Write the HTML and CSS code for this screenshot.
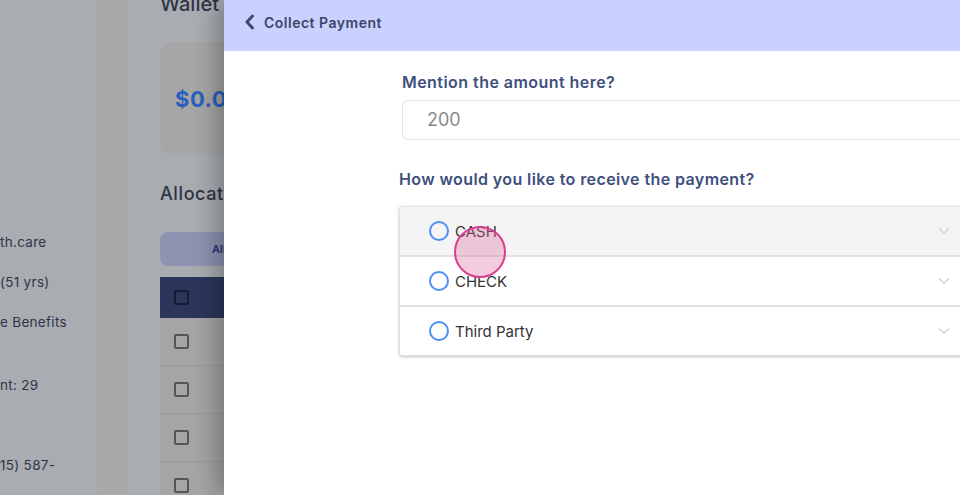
FILE: index.html
```html
<!DOCTYPE html>
<html>
<head>
<meta charset="utf-8">
<link rel="stylesheet" href="styles.css">
</head>
<body>
<div class="page">
  <aside class="info">
    <div class="line l1">th.care</div>
    <div class="line l2">(51 yrs)</div>
    <div class="line l3">e Benefits</div>
    <div class="line l4">nt: 29</div>
    <div class="line l5">15) 587-</div>
  </aside>
  <div class="gutter"></div>
  <main class="main">
    <h2 class="title">Wallet</h2>
    <div class="card"><span class="amount">$0.00</span></div>
    <h3 class="sub">Allocations</h3>
    <div class="pill">All</div>
    <div class="table">
      <div class="row head"><span class="cb"></span></div>
      <div class="row"><span class="cb"></span></div>
      <div class="row"><span class="cb"></span></div>
      <div class="row"><span class="cb"></span></div>
      <div class="row"><span class="cb"></span></div>
    </div>
  </main>

  <section class="panel">
    <header class="panel-head">
      <svg class="back" width="11" height="16" viewBox="0 0 11 16"><path d="M8.5 2 L3 8 L8.5 14" fill="none" stroke="#3e4a70" stroke-width="3" stroke-linecap="round" stroke-linejoin="round"/></svg>
      <span>Collect Payment</span>
    </header>
    <div class="panel-body">
      <label class="label">Mention the amount here?</label>
      <div class="input">200</div>
      <label class="label label2">How would you like to receive the payment?</label>
      <div class="accordion">
        <div class="opt active"><span class="radio"></span><span class="opt-text">CASH</span><svg class="chev" width="12" height="8" viewBox="0 0 12 8"><path d="M1 1.5 L6 6 L11 1.5" fill="none" stroke="#d4d4d8" stroke-width="1.5"/></svg></div>
        <div class="opt"><span class="radio"></span><span class="opt-text">CHECK</span><svg class="chev" width="12" height="8" viewBox="0 0 12 8"><path d="M1 1.5 L6 6 L11 1.5" fill="none" stroke="#d4d4d8" stroke-width="1.5"/></svg></div>
        <div class="opt"><span class="radio"></span><span class="opt-text">Third Party</span><svg class="chev" width="12" height="8" viewBox="0 0 12 8"><path d="M1 1.5 L6 6 L11 1.5" fill="none" stroke="#d4d4d8" stroke-width="1.5"/></svg></div>
      </div>
    </div>
  </section>
  <div class="touch"></div>
</div>
</body>
</html>
```

FILE: styles.css
```css
* { box-sizing: border-box; }
html, body { margin: 0; padding: 0; }
body {
  width: 960px;
  height: 495px;
  overflow: hidden;
  font-family: Inter, "Noto Sans", sans-serif;
  background: #a9adb2;
}
.page {
  position: relative;
  display: grid;
  grid-template-columns: 97px 31px 1fr;
  height: 495px;
}
.info {
  background: #a9adb2;
  padding-top: 232px;
  color: #2e3546;
  font-size: 13.5px;
  letter-spacing: 0.3px;
  white-space: nowrap;
}
.line { height: 20px; line-height: 20px; }
.l2 { margin-top: 20px; }
.l3 { margin-top: 20px; }
.l4 { margin-top: 43px; }
.l5 { margin-top: 60px; }
.gutter { background: #a8a9ab; }
.main {
  background: #a9adb2;
  padding-left: 32px;
  overflow: hidden;
}
.title {
  margin: -9px 0 0;
  font-size: 20px;
  line-height: 26px;
  font-weight: 500;
  color: #2e3546;
}
.card {
  margin-top: 25px;
  width: 200px;
  height: 113px;
  border-radius: 12px;
  background: #a6a6a7;
  display: flex;
  align-items: center;
  padding-left: 15px;
}
.amount {
  font-size: 22px;
  font-weight: 700;
  color: #2b5fbf;
  letter-spacing: 0.5px;
}
.sub {
  margin: 27px 0 0;
  font-size: 18px;
  line-height: 24px;
  font-weight: 500;
  color: #2e3546;
  letter-spacing: 0.6px;
}
.pill {
  margin-top: 26px;
  width: 200px;
  height: 34px;
  border-radius: 8px;
  background: #8e93b2;
  color: #263578;
  font-size: 11px;
  font-weight: 600;
  line-height: 34px;
  padding-left: 52px;
}
.table { margin-top: 11px; width: 200px; }
.row {
  height: 48px;
  background: #a5a5a5;
  border-bottom: 1px solid #999a9c;
  display: flex;
  align-items: center;
  padding-left: 14px;
}
.row.head { height: 41px; background: #2b365a; border-bottom: none; }
.cb {
  width: 15px; height: 15px;
  border: 2px solid #555;
  border-radius: 2px;
}
.head .cb { border-color: #151c30; }

.panel {
  position: absolute;
  left: 224px;
  top: 0;
  width: 736px;
  height: 495px;
  background: #fff;
  box-shadow: -8px 0 22px rgba(0, 0, 0, 0.28);
  overflow: hidden;
}
.panel-head {
  height: 51px;
  background: #cbd1fe;
  display: flex;
  align-items: center;
  padding: 0 0 6px 20px;
  gap: 9px;
  color: #3a4668;
  font-size: 14px;
  font-weight: 600;
  letter-spacing: 0.5px;
}
.back { margin-top: -1px; }
.panel-body {
  padding: 19px 0 0 178px;
}
.label {
  display: block;
  font-size: 16px;
  line-height: 24px;
  font-weight: 600;
  color: #3e4f7d;
  letter-spacing: 0.45px;
}
.input {
  margin-top: 6px;
  width: 570px;
  height: 40px;
  border: 1px solid #e2e2e2;
  border-radius: 6px;
  padding-left: 24px;
  line-height: 38px;
  font-size: 18px;
  color: #8a8a8a;
}
.label2 { margin: 27px 0 0 -3px; letter-spacing: 0.4px; }
.accordion {
  margin: 15px 0 0 -3px;
  width: 570px;
  border: 1px solid #e2e2e2;
  box-shadow: 0 1px 3px rgba(0, 0, 0, 0.25);
  border-radius: 3px;
}
.opt {
  height: 50px;
  display: flex;
  align-items: center;
  padding: 0 18px 0 29px;
  border-top: 2px solid #e0e0e0;
}
.opt:first-child { border-top: none; height: 48px; }
.opt.active { background: #f4f4f4; }
.radio {
  width: 20px; height: 20px;
  border: 2px solid #4d8ef6;
  border-radius: 50%;
  background: #fff;
}
.active .radio { background: #f4f4f4; }
.opt-text {
  margin-left: 6px;
  font-size: 15px;
  color: #333;
  flex: 1;
}
.touch {
  position: absolute;
  left: 454px;
  top: 226px;
  width: 52px;
  height: 52px;
  border-radius: 50%;
  background: rgba(222, 108, 160, 0.35);
  border: 2px solid #d6428c;
}
```
